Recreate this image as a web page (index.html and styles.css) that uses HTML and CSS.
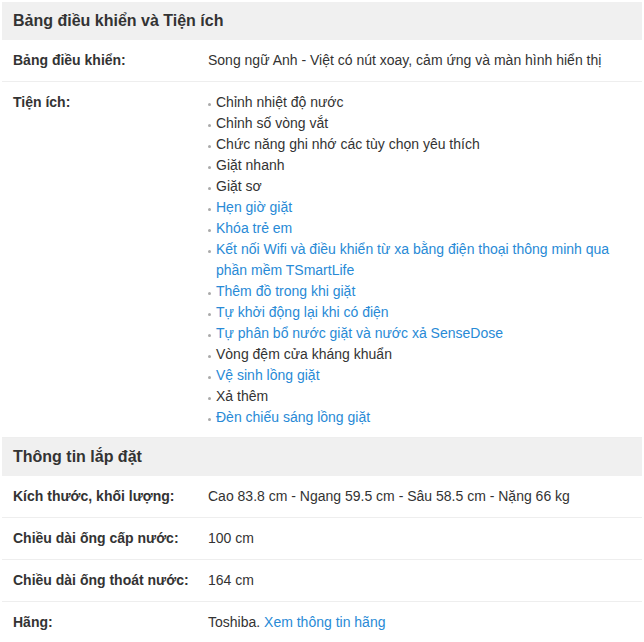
FILE: index.html
```html
<!DOCTYPE html>
<html lang="vi">
<head>
<meta charset="utf-8">
<title>Thông số kỹ thuật</title>
<link rel="stylesheet" href="styles.css">
</head>
<body>
<div class="specs">
  <h3 class="group-title">Bảng điều khiển và Tiện ích</h3>
  <div class="row">
    <div class="label">Bảng điều khiển:</div>
    <div class="value">Song ngữ Anh - Việt có nút xoay, cảm ứng và màn hình hiển thị</div>
  </div>
  <div class="row row-list">
    <div class="label">Tiện ích:</div>
    <ul class="value list">
      <li><span>Chỉnh nhiệt độ nước</span></li>
      <li><span>Chỉnh số vòng vắt</span></li>
      <li><span>Chức năng ghi nhớ các tùy chọn yêu thích</span></li>
      <li><span>Giặt nhanh</span></li>
      <li><span>Giặt sơ</span></li>
      <li><a href="#">Hẹn giờ giặt</a></li>
      <li><a href="#">Khóa trẻ em</a></li>
      <li><a href="#">Kết nối Wifi và điều khiển từ xa bằng điện thoại thông minh qua phần mềm TSmartLife</a></li>
      <li><a href="#">Thêm đồ trong khi giặt</a></li>
      <li><a href="#">Tự khởi động lại khi có điện</a></li>
      <li><a href="#">Tự phân bổ nước giặt và nước xả SenseDose</a></li>
      <li><span>Vòng đệm cửa kháng khuẩn</span></li>
      <li><a href="#">Vệ sinh lồng giặt</a></li>
      <li><span>Xả thêm</span></li>
      <li><a href="#">Đèn chiếu sáng lồng giặt</a></li>
    </ul>
  </div>
  <h3 class="group-title">Thông tin lắp đặt</h3>
  <div class="row">
    <div class="label">Kích thước, khối lượng:</div>
    <div class="value">Cao 83.8 cm - Ngang 59.5 cm - Sâu 58.5 cm - Nặng 66 kg</div>
  </div>
  <div class="row">
    <div class="label">Chiều dài ống cấp nước:</div>
    <div class="value">100 cm</div>
  </div>
  <div class="row">
    <div class="label">Chiều dài ống thoát nước:</div>
    <div class="value">164 cm</div>
  </div>
  <div class="row">
    <div class="label">Hãng:</div>
    <div class="value">Toshiba. <a href="#">Xem thông tin hãng</a></div>
  </div>
</div>
</body>
</html>
```
FILE: styles.css
```css
html, body {
  margin: 0;
  padding: 0;
  background: #fff;
}
body {
  padding: 2px;
  font-family: "Liberation Sans", Arial, sans-serif;
  font-size: 14px;
  color: #333;
}
.specs {
  width: 640px;
}
.group-title {
  margin: 0;
  background: #f0f0f0;
  height: 38px;
  line-height: 38px;
  padding: 0 11px;
  font-size: 16px;
  font-weight: bold;
  color: #333;
}
.row {
  display: grid;
  grid-template-columns: 206px 1fr;
  padding: 10px 0;
  line-height: 21px;
  border-bottom: 1px solid #eee;
}
.row-list {
  padding-top: 10px;
  padding-bottom: 9px;
}
.label {
  padding-left: 11px;
  font-weight: bold;
  color: #333;
}
.value {
  padding-right: 10px;
  color: #333;
}
.list {
  margin: 0;
  padding-left: 0;
  list-style: none;
}
.list li {
  display: flex;
}
.list li::before {
  content: "";
  flex: none;
  width: 3px;
  height: 3px;
  margin-top: 11px;
  margin-right: 5px;
  border-radius: 50%;
  background: #aaa;
}
a {
  color: #288ad6;
  text-decoration: none;
}
```
